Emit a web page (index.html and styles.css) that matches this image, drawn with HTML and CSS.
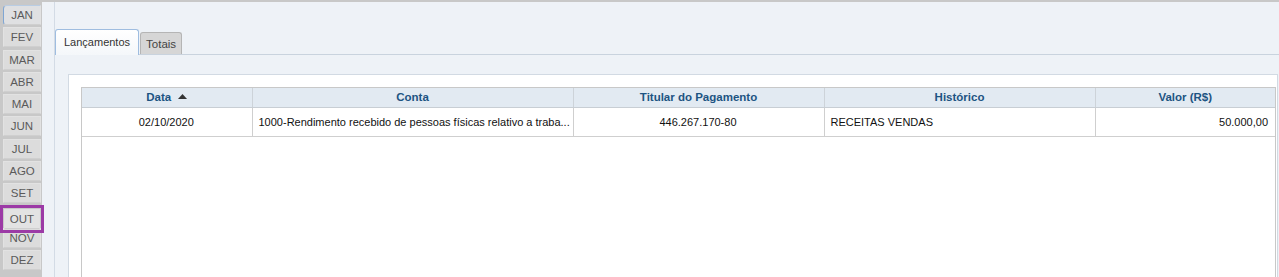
FILE: index.html
```html
<html>
  <head>
    <meta charset="utf-8">
    <title>Lançamentos</title>
    <link rel="stylesheet" href="styles.css">
  </head>

  <body>
    <div class="topbar"></div>

    <div class="layout">
      <!-- month selector -->
      <div class="months">
        <span class="month active">JAN</span>
        <span class="month">FEV</span>
        <span class="month">MAR</span>
        <span class="month">ABR</span>
        <span class="month">MAI</span>
        <span class="month">JUN</span>
        <span class="month">JUL</span>
        <span class="month">AGO</span>
        <span class="month">SET</span>
        <span class="month marked">OUT</span>
        <span class="month">NOV</span>
        <span class="month">DEZ</span>
      </div>

      <div class="main">
        <div class="tabs">
          <span class="tab current">Lançamentos</span>
          <span class="tab">Totais</span>
        </div>

        <div class="tabbody">
          <div class="panel">
            <div class="grid">
              <table>
                <colgroup>
                  <col style="width:170px">
                  <col style="width:321px">
                  <col style="width:251px">
                  <col style="width:271px">
                  <col>
                </colgroup>
                <thead>
                  <tr>
                    <th>Data <svg class="sort" width="9" height="5" viewBox="0 0 9 5"><path d="M0 5 L4.5 0 L9 5 Z" fill="#333"/></svg></th>
                    <th>Conta</th>
                    <th>Titular do Pagamento</th>
                    <th>Histórico</th>
                    <th>Valor (R$)</th>
                  </tr>
                </thead>
                <tbody>
                  <tr>
                    <td class="center">02/10/2020</td>
                    <td>1000-Rendimento recebido de pessoas físicas relativo a traba...</td>
                    <td class="center">446.267.170-80</td>
                    <td>RECEITAS VENDAS</td>
                    <td class="right">50.000,00</td>
                  </tr>
                </tbody>
              </table>
            </div>
          </div>
        </div>
      </div>
    </div>
  </body>
</html>
```

FILE: styles.css
```css
html, body {
  margin: 0;
  height: 277px;
  overflow: hidden;
  background-color: #eef2f7;
  font-family: "Liberation Sans", Arial, sans-serif;
  font-size: 12px;
}

.topbar {
  height: 2px;
  background-color: #c8c8c8;
}

.layout {
  display: flex;
  height: 275px;
}

/* month column */
.months {
  width: 42px;
  flex: none;
  background-color: #c8c8c8;
  padding: 3px 0 0 3px;
  box-sizing: border-box;
  display: flex;
  flex-direction: column;
  gap: 2.3px;
}
.month {
  width: 38px;
  height: 20px;
  flex: none;
  box-sizing: border-box;
  background-color: #dcdcdc;
  border: 1px solid #e2e2e2;
  border-bottom-color: #cfcfcf;
  color: #5a5a5a;
  font-size: 11.5px;
  line-height: 18px;
  text-align: center;
}
.month.active {
  border-left: 1px solid #7fa6d3;
  border-top-color: #b9cde4;
  border-radius: 4px 0 0 3px;
  background-color: #dfe0e2;
}
.month.marked {
  background-color: #e3e3e3;
  outline: 3px solid #9c3aa6;
  outline-offset: 1px;
  position: relative;
  top: 3px;
  width: 36px;
  margin-left: 1px;
}

.main {
  flex: 1;
  margin-left: 12px;
  border-left: 1px solid #d3dbe5;
  display: flex;
  flex-direction: column;
}

/* tabs */
.tabs {
  height: 52px;
  flex: none;
  display: flex;
  align-items: flex-end;
  gap: 1px;
  border-bottom: 1px solid #c9d3de;
}
.tab {
  height: 22px;
  box-sizing: border-box;
  padding: 0 5px;
  border: 1px solid #b5b5b5;
  border-bottom: 0;
  border-radius: 3px 3px 0 0;
  background-color: #d6d6d6;
  color: #444;
  font-size: 11.5px;
  line-height: 22px;
}
.tab.current {
  height: 26px;
  margin-bottom: -1px;
  padding: 0 8px;
  border-color: #9fbde0;
  background: linear-gradient(#ffffff, #f4f7fa);
  color: #333;
  font-size: 11px;
  line-height: 24px;
}

.tabbody {
  flex: 1;
  padding: 19px 1px 0 13px;
  display: flex;
  min-height: 0;
}
.panel {
  flex: 1;
  background-color: #fff;
  border: 1px solid #d2dae3;
  border-bottom: 0;
  padding: 12px 1px 0 12px;
  display: flex;
}

/* grid */
.grid {
  flex: 1;
  border: 1px solid #c8c8c8;
  border-bottom: 0;
}
.grid table {
  width: 100%;
  table-layout: fixed;
  border-collapse: collapse;
}
.grid th {
  height: 19px;
  padding: 0;
  background-color: #e2eaf2;
  border-left: 1px solid #cdd3d9;
  border-bottom: 1px solid #c8ced4;
  color: #1d5482;
  font-weight: bold;
  font-size: 11.5px;
  text-align: center;
}
.grid th:first-child, .grid td:first-child {
  border-left: 0;
}
.sort {
  margin-left: 4px;
  vertical-align: 2px;
}
.grid td {
  height: 29px;
  padding: 0 7px 0 6px;
  border-left: 1px solid #cfcfcf;
  border-bottom: 1px solid #cfcfcf;
  color: #111;
  font-size: 11px;
  white-space: nowrap;
  overflow: hidden;
}
.center {
  text-align: center;
}
.right {
  text-align: right;
}
```
